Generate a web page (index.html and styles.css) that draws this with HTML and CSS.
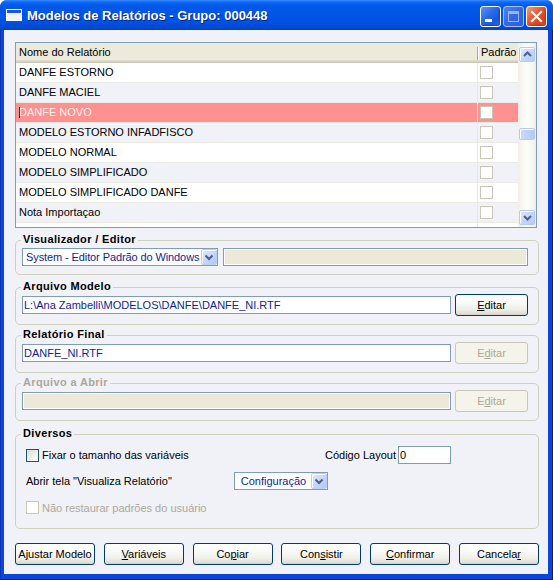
FILE: index.html
```html
<!DOCTYPE html>
<html lang="pt">
<head>
<meta charset="utf-8">
<title>Modelos de Relatórios</title>
<link rel="stylesheet" href="styles.css">
</head>
<body>
<div class="window">
  <div class="titlebar">
    <svg class="app-icon" width="16" height="16" viewBox="0 0 16 16">
      <rect x="0" y="2" width="16" height="12" fill="#ffffff"/>
      <rect x="1" y="3" width="14" height="3" fill="#1F55D8"/>
      <rect x="1" y="6" width="14" height="7" fill="#F2F2F2"/>
    </svg>
    <span class="title">Modelos de Relatórios - Grupo: 000448</span>
    <div class="caption">
      <span class="cap-btn cap-min"><svg width="19" height="19" viewBox="0 0 19 19"><rect x="4" y="12" width="7" height="3" fill="#ffffff"/></svg></span>
      <span class="cap-btn cap-max"><svg width="19" height="19" viewBox="0 0 19 19"><rect x="4.5" y="4.5" width="10" height="10" fill="none" stroke="#9DB4EE" stroke-width="1"/><rect x="4" y="4" width="11" height="3" fill="#9DB4EE"/></svg></span>
      <span class="cap-btn cap-close"><svg width="19" height="19" viewBox="0 0 19 19"><path d="M5 5 L14 14 M14 5 L5 14" stroke="#ffffff" stroke-width="2.2" stroke-linecap="square"/></svg></span>
    </div>
  </div>
  <div class="frame">
    <div class="client">

      <div class="grid">
        <div class="grid-cells">
          <div class="grid-head">
            <div class="hc hc-name">Nome do Relatório</div>
            <div class="hc hc-pad">Padrão</div>
          </div>
          <div class="row"><div class="c-name">DANFE ESTORNO</div><div class="c-pad"><span class="gchk"></span></div></div>
          <div class="row alt"><div class="c-name">DANFE MACIEL</div><div class="c-pad"><span class="gchk"></span></div></div>
          <div class="row sel"><div class="c-name"><span class="caret"></span>DANFE NOVO</div><div class="c-pad"><span class="gchk"></span></div></div>
          <div class="row alt"><div class="c-name">MODELO ESTORNO INFADFISCO</div><div class="c-pad"><span class="gchk"></span></div></div>
          <div class="row"><div class="c-name">MODELO NORMAL</div><div class="c-pad"><span class="gchk"></span></div></div>
          <div class="row alt"><div class="c-name">MODELO SIMPLIFICADO</div><div class="c-pad"><span class="gchk"></span></div></div>
          <div class="row"><div class="c-name">MODELO SIMPLIFICADO DANFE</div><div class="c-pad"><span class="gchk"></span></div></div>
          <div class="row alt"><div class="c-name">Nota Importaçao</div><div class="c-pad"><span class="gchk"></span></div></div>
          <div class="row"><div class="c-name"></div><div class="c-pad"></div></div>
        </div>
        <div class="vscroll">
          <span class="sb-btn"><svg width="13" height="13" viewBox="0 0 13 13"><path d="M3 8 L6.5 4.5 L10 8" fill="none" stroke="#4D6185" stroke-width="2"/></svg></span>
          <span class="sb-gap"></span>
          <span class="sb-thumb"></span>
          <span class="sb-fill"></span>
          <span class="sb-btn"><svg width="13" height="13" viewBox="0 0 13 13"><path d="M3 5 L6.5 8.5 L10 5" fill="none" stroke="#4D6185" stroke-width="2"/></svg></span>
        </div>
      </div>

      <div class="group g-vis">
        <div class="gtitle">Visualizador / Editor</div>
        <div class="fields fields-vis">
          <div class="combo combo-vis">
            <span class="combo-text">System - Editor Padrão do Windows</span>
            <span class="dd"><svg width="14" height="14" viewBox="0 0 14 14"><path d="M3.5 5.5 L7 9 L10.5 5.5" fill="none" stroke="#4D6185" stroke-width="2"/></svg></span>
          </div>
          <div class="tbox tbox-off tbox-vis"></div>
        </div>
      </div>

      <div class="group g-mod">
        <div class="gtitle">Arquivo Modelo</div>
        <div class="fields">
          <div class="tbox tbox-file">L:\Ana Zambelli\MODELOS\DANFE\DANFE_NI.RTF</div>
          <div class="btn btn-edit"><u>E</u>ditar</div>
        </div>
      </div>

      <div class="group g-fin">
        <div class="gtitle">Relatório Final</div>
        <div class="fields">
          <div class="tbox tbox-file">DANFE_NI.RTF</div>
          <div class="btn btn-edit btn-off">E<u>d</u>itar</div>
        </div>
      </div>

      <div class="group g-abr">
        <div class="gtitle gtitle-off">Arquivo a Abrir</div>
        <div class="fields">
          <div class="tbox tbox-file tbox-off"></div>
          <div class="btn btn-edit btn-off">E<u>d</u>itar</div>
        </div>
      </div>

      <div class="group g-div">
        <div class="gtitle">Diversos</div>
        <div class="div-body">
          <div class="div-row div-row1">
            <div class="chk-line"><span class="chk"></span><span>Fixar o tamanho das variáveis</span></div>
            <span class="code-label">Código Layout</span>
            <div class="tbox tbox-code">0</div>
          </div>
          <div class="div-row div-row2">
            <span class="open-label">Abrir tela "Visualiza Relatório"</span>
            <div class="combo combo-cfg">
              <span class="combo-text">Configuração</span>
              <span class="dd"><svg width="14" height="14" viewBox="0 0 14 14"><path d="M3.5 5.5 L7 9 L10.5 5.5" fill="none" stroke="#4D6185" stroke-width="2"/></svg></span>
            </div>
          </div>
          <div class="div-row div-row3">
            <div class="chk-line chk-line-off"><span class="chk chk-off"></span><span>Não restaurar padrões do usuário</span></div>
          </div>
        </div>
      </div>

      <div class="actions">
        <div class="btn">Ajustar Modelo</div>
        <div class="btn"><u>V</u>ariáveis</div>
        <div class="btn">Co<u>p</u>iar</div>
        <div class="btn">Con<u>s</u>istir</div>
        <div class="btn"><u>C</u>onfirmar</div>
        <div class="btn">Cancela<u>r</u></div>
      </div>

    </div>
  </div>
</div>
</body>
</html>
```

FILE: styles.css
```css
* { box-sizing: border-box; }
html, body { margin: 0; padding: 0; }
body {
  width: 553px;
  height: 580px;
  overflow: hidden;
  background: #ffffff;
  font-family: "Liberation Sans", Arial, sans-serif;
  font-size: 11px;
  color: #000000;
}

/* ---------- window chrome ---------- */
.window {
  width: 553px;
  height: 580px;
  display: flex;
  flex-direction: column;
  border-radius: 7px 7px 0 0;
  overflow: hidden;
  background: #0A46D8;
}
.titlebar {
  height: 30px;
  flex: none;
  display: flex;
  align-items: center;
  background: linear-gradient(#3A8CFF 0px, #0F6AF5 2px, #0058EA 6px, #0055E5 14px, #0052E0 22px, #004AD6 27px, #0043CC 30px);
}
.app-icon { margin-left: 6px; flex: none; display: block; }
.title {
  margin-left: 5px;
  color: #ffffff;
  font-weight: bold;
  font-size: 13px;
  text-shadow: 1px 1px 0 #0A2284;
  white-space: nowrap;
}
.caption {
  margin-left: auto;
  margin-right: 6px;
  align-self: flex-start;
  margin-top: 6px;
  display: flex;
  gap: 2px;
}
.cap-btn {
  width: 21px;
  height: 21px;
  border: 1px solid #ffffff;
  border-radius: 3px;
  display: block;
}
.cap-btn svg { display: block; }
.cap-min {
  background: linear-gradient(135deg, #5C96F8 0%, #2767EA 45%, #1B56DC 75%, #3A72E6 100%);
  box-shadow: inset -1px -1px 1px rgba(0, 20, 120, 0.35);
}
.cap-max {
  border-color: #A9BFF2;
  background: linear-gradient(135deg, #4F86F0 0%, #3368E2 50%, #2C5ED8 100%);
}
.cap-close {
  background: linear-gradient(135deg, #F29A7C 0%, #E3562F 45%, #D34220 80%, #DE5A34 100%);
  box-shadow: inset -1px -1px 1px rgba(120, 20, 0, 0.35);
}
.frame {
  flex: 1;
  display: flex;
  padding: 0 5px 6px 4px;
  background: #0A46D8;
  box-shadow: inset 1px 0 0 #0C34B8, inset -1px 0 0 #00148C, inset 0 -1px 0 #00148C;
}
.client {
  flex: 1;
  background: #F1F2F7;
  display: flex;
  flex-direction: column;
}

/* ---------- grid ---------- */
.grid {
  flex: none;
  margin: 12px 0 0 11px;
  width: 522px;
  height: 186px;
  border: 1px solid #7F9DB9;
  background: #ffffff;
  display: flex;
}
.grid-cells {
  width: 502px;
  height: 100%;
  overflow: hidden;
}
.grid-head {
  height: 20px;
  display: flex;
  background: #EBEADB;
  box-shadow: inset 0 -1px 0 #CBC7B8, inset 0 -2px 0 #D6D2C2, inset 0 -3px 0 #E2DECD;
}
.hc { line-height: 19px; white-space: nowrap; }
.hc-name { width: 461px; padding-left: 3px; }
.hc-pad {
  width: 41px;
  padding-left: 4px;
  background:
    linear-gradient(#ACA899, #ACA899) no-repeat 0 4px / 1px 13px,
    linear-gradient(#ffffff, #ffffff) no-repeat 1px 4px / 1px 13px;
}
.row {
  height: 20px;
  display: flex;
  background: #ffffff;
  border-bottom: 1px solid #EAE9E2;
}
.row.alt { background: #F1F2F7; }
.row.sel { background: #FF9191; color: #FFF0F0; }
.c-name {
  width: 461px;
  line-height: 19px;
  padding-left: 3px;
  white-space: nowrap;
}
.c-pad {
  width: 41px;
  border-left: 1px solid #EAE9E2;
  padding: 3px 0 0 2px;
}
.gchk {
  display: block;
  width: 13px;
  height: 13px;
  border: 1px solid #CAC8BB;
  background: #ffffff;
}
.caret {
  display: inline-block;
  width: 1px;
  height: 11px;
  background: #000000;
  vertical-align: -2px;
  margin-right: -1px;
}

/* ---------- scrollbar ---------- */
.vscroll {
  width: 18px;
  height: 100%;
  display: flex;
  flex-direction: column;
  padding: 4px 1px 2px 1px;
  background: linear-gradient(to right, #F1EFE7, #FDFDFA 45%, #F5F4EF 85%, #EDEBE3);
}
.sb-btn, .sb-thumb {
  flex: none;
  border: 1px solid #B7CAF5;
  border-radius: 2px;
  box-shadow: inset 1px 1px 0 #ffffff;
}
.sb-btn {
  height: 15px;
  display: flex;
  align-items: center;
  justify-content: center;
  background: linear-gradient(135deg, #E3ECFE 0%, #C6D7FC 50%, #B4C9F8 100%);
}
.sb-btn svg { display: block; }
.sb-gap { height: 66px; flex: none; }
.sb-thumb {
  height: 12px;
  background: linear-gradient(to right, #CCDAFC, #BED0FA 60%, #B3C8F8);
}
.sb-fill { flex: 1; }

/* ---------- group boxes ---------- */
.group {
  flex: none;
  margin-left: 11px;
  width: 524px;
  border: 1px solid #D0D0BF;
  border-radius: 5px;
}
.gtitle {
  margin: -8px 0 -5px 5px;
  padding: 0 2px;
  width: max-content;
  line-height: 13px;
  background: #F1F2F7;
  font-weight: bold;
  letter-spacing: 0.35px;
}
.gtitle-off { color: #ACA899; }
.g-vis { margin-top: 12px; }
.g-mod { margin-top: 12px; }
.g-fin { margin-top: 10px; }
.g-abr { margin-top: 10px; }
.g-div { margin-top: 13px; }

.fields {
  display: flex;
  align-items: center;
  padding: 6px 10px 8px 6px;
}
.fields-vis { padding-top: 7px; }

.tbox {
  height: 18px;
  border: 1px solid #7F9DB9;
  background: #ffffff;
  line-height: 16px;
  padding-left: 1px;
  color: #101E99;
  white-space: nowrap;
  overflow: hidden;
  flex: none;
}
.tbox-off {
  background: #ECE9D8;
  box-shadow: inset -1px -1px 0 #ffffff, inset 1px 1px 0 #ffffff;
}
.tbox-vis { width: 305px; margin-left: 5px; }
.tbox-file { width: 429px; margin-right: 4px; }
.tbox-code { width: 53px; color: #000000; }

.combo {
  height: 18px;
  border: 1px solid #7F9DB9;
  background: #ffffff;
  display: flex;
  flex: none;
  color: #101E99;
}
.combo-text {
  flex: 1;
  white-space: nowrap;
  line-height: 16px;
}
.combo-vis { width: 196px; }
.combo-vis .combo-text { padding-left: 3px; letter-spacing: -0.1px; }
.combo-cfg { width: 94px; }
.combo-cfg .combo-text { text-align: center; padding-left: 1px; }
.dd {
  width: 16px;
  height: 16px;
  flex: none;
  margin-left: auto;
  border: 1px solid #BCCEF7;
  border-radius: 2px;
  background: linear-gradient(135deg, #E3ECFE 0%, #C6D7FC 50%, #B2C7F8 100%);
  display: flex;
  align-items: center;
  justify-content: center;
  box-shadow: inset 1px 1px 0 #ffffff;
}
.dd svg { display: block; }

/* ---------- buttons ---------- */
.btn {
  height: 22px;
  width: 80px;
  flex: none;
  border: 1px solid #003C74;
  border-radius: 3px;
  background: linear-gradient(#FFFFFF 0%, #FAFAF8 35%, #F0F0EA 70%, #E3E1D8 90%, #D6D0C5 100%);
  line-height: 20px;
  text-align: center;
  white-space: nowrap;
  color: #000000;
}
.btn u { text-decoration: underline; text-underline-offset: 1px; }
.btn-edit { width: 73px; }
.btn-off {
  border-color: #C9C7BA;
  background: #F5F4EA;
  color: #ACA899;
}

/* ---------- diversos ---------- */
.div-body { padding: 11px 10px 14px 10px; }
.div-row { display: flex; align-items: center; }
.div-row1 { height: 18px; }
.div-row2 { height: 18px; margin-top: 8px; }
.div-row3 { height: 13px; margin-top: 11px; }
.chk-line { display: flex; align-items: center; width: 299px; white-space: nowrap; }
.chk-line-off { color: #ACA899; }
.chk {
  width: 13px;
  height: 13px;
  flex: none;
  margin-right: 3px;
  border: 1px solid #1C5180;
  background: linear-gradient(135deg, #DCDBD5 0%, #EEEEE9 50%, #FFFFFF 100%);
}
.chk-off { border-color: #CAC8BB; background: #ffffff; }
.code-label { width: 73px; white-space: nowrap; }
.open-label { width: 208px; white-space: nowrap; }

.actions {
  flex: none;
  display: flex;
  justify-content: space-between;
  margin: 14px 0 0 11px;
  width: 524px;
}
```
